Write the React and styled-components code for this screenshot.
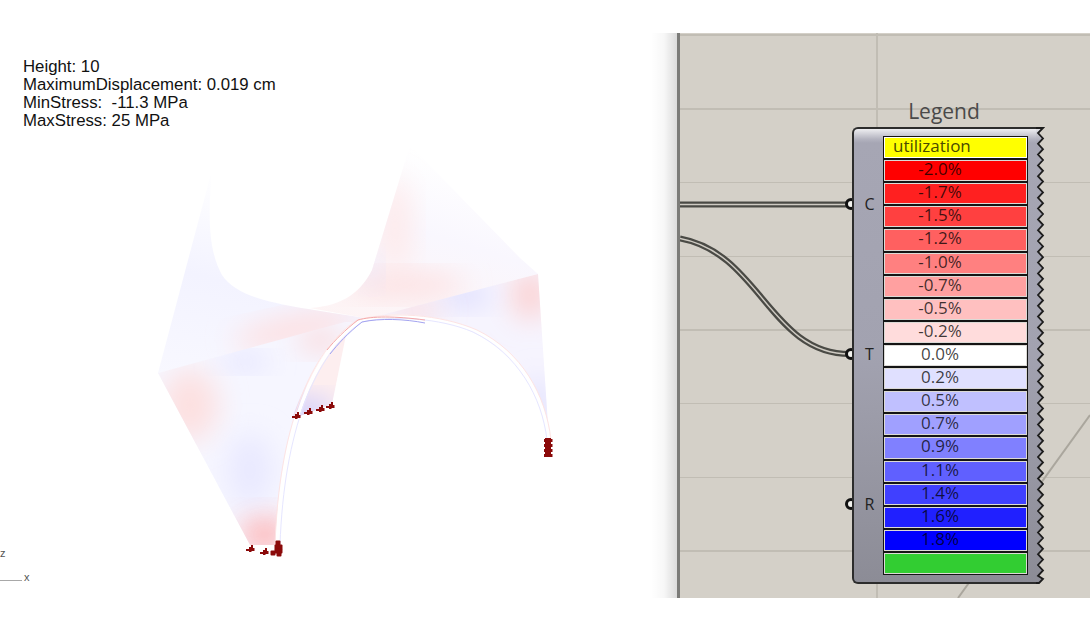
import React from 'react';
import styled, { createGlobalStyle } from 'styled-components';

const GlobalStyle = createGlobalStyle`
  html, body {
    margin: 0;
    padding: 0;
    background: #ffffff;
    overflow: hidden;
  }
`;

const Page = styled.div`
  display: flex;
  width: 1090px;
  height: 631px;
  background: #ffffff;
`;

const Viewport = styled.div`
  position: relative;
  flex: 0 0 677px;
  height: 100%;
  padding: 58px 0 0 23px;
  box-sizing: border-box;
`;

const Stats = styled.div`
  position: relative;
  z-index: 1;
  font-family: 'Liberation Sans', Arial, sans-serif;
  font-size: 16.8px;
  line-height: 18px;
  color: #111111;
  white-space: pre;
`;

const MeshDrawing = styled.svg`
  position: absolute;
  left: 0;
  top: 0;
`;

const AxisLabel = styled.span`
  position: absolute;
  left: ${(p) => p.$x}px;
  top: ${(p) => p.$y}px;
  font-family: 'Liberation Sans', Arial, sans-serif;
  font-size: 11px;
  line-height: 12px;
  color: #555555;
`;

const AxisLine = styled.div`
  position: absolute;
  left: 0;
  top: 580px;
  width: 22px;
  height: 1px;
  background: #a8a8a8;
`;

const Canvas = styled.div`
  position: relative;
  flex: 0 0 413px;
  height: 565px;
  margin-top: 33px;
  box-sizing: border-box;
  border-left: 3px solid #7b7b78;
  background-color: #d4d0c8;
  background-image:
    linear-gradient(#c1bdb4, #c1bdb4),
    repeating-linear-gradient(
      to bottom,
      transparent 0,
      transparent 1.5px,
      #c1bdb4 1.5px,
      #c1bdb4 3px,
      transparent 3px,
      transparent 73.7px
    );
  background-size: 2px 100%, 100% 100%;
  background-position: 196px 0, 0 0;
  background-repeat: no-repeat;

  &::before {
    content: '';
    position: absolute;
    left: -29px;
    top: 0;
    bottom: 0;
    width: 26px;
    background: linear-gradient(to right, rgba(0, 0, 0, 0), rgba(0, 0, 0, 0.03) 50%, rgba(0, 0, 0, 0.14));
  }
`;

const WireDrawing = styled.svg`
  position: absolute;
  left: 0;
  top: 0;
`;

const Node = styled.div`
  position: absolute;
  z-index: 0;
  left: 172px;
  top: 63px;
  display: flex;
  flex-direction: column;
  width: 194px;
`;

const NodeTitle = styled.div`
  width: 184px;
  height: 31px;
  font-family: 'Open Sans', sans-serif;
  font-size: 21px;
  line-height: 30px;
  text-align: center;
  color: #4a4a4a;
`;

const NodeBody = styled.div`
  display: flex;
  height: 457px;
`;

const Shell = styled.div`
  display: flex;
  flex: 0 0 184px;
  box-sizing: border-box;
  border: 2px solid #2c2c2c;
  border-right: 0;
  border-radius: 6px 0 0 6px;
  background: linear-gradient(
    to bottom,
    #eeeef1 0,
    #b4b4c0 10px,
    #a6a6b4 14px,
    #a2a2b0 50%,
    #8c8c96 100%
  );
`;

const Inputs = styled.div`
  display: grid;
  grid-template-rows: repeat(3, 1fr);
  flex: 0 0 29px;
  padding-bottom: 3px;
`;

const Input = styled.div`
  position: relative;
  display: flex;
  align-items: center;
  justify-content: center;
  padding-left: 2px;
  font-family: 'Open Sans', sans-serif;
  font-size: 16px;
  color: #222222;
`;

const Port = styled.span`
  position: absolute;
  z-index: -1;
  left: -9px;
  top: 50%;
  width: 6px;
  height: 6px;
  margin-top: -6px;
  border: 3px solid #111111;
  border-radius: 50%;
  background: #f4f4f0;
`;

const Swatches = styled.div`
  display: flex;
  flex: 1;
  flex-direction: column;
  gap: 2px;
  margin: 7px 8px 7px 0;
  border: 1.5px solid #141414;
  background: #141414;
`;

const Swatch = styled.div`
  flex: 1;
  box-sizing: border-box;
  padding-right: 31px;
  border: 1.5px solid #dcdad6;
  background: ${(p) => p.$color};
  font-family: 'Open Sans', sans-serif;
  font-size: 17px;
  line-height: 15px;
  text-align: center;
  color: rgba(0, 0, 0, 0.75);
`;

const HeaderSwatch = styled(Swatch)`
  padding: 0 0 0 8px;
  border-color: #ffffff;
  line-height: 15px;
  text-align: left;
  color: #4a4a00;
`;

const Zigzag = styled.svg`
  flex: 0 0 9px;
  display: block;
`;

const rows = [
  ['-2.0%', '#ff0000'],
  ['-1.7%', '#ff2020'],
  ['-1.5%', '#ff4040'],
  ['-1.2%', '#ff6060'],
  ['-1.0%', '#ff8080'],
  ['-0.7%', '#ffa0a0'],
  ['-0.5%', '#ffc0c0'],
  ['-0.2%', '#ffdcdc'],
  ['0.0%', '#ffffff'],
  ['0.2%', '#e0e0ff'],
  ['0.5%', '#c0c0ff'],
  ['0.7%', '#a0a0ff'],
  ['0.9%', '#8080ff'],
  ['1.1%', '#6060ff'],
  ['1.4%', '#4040ff'],
  ['1.6%', '#2020ff'],
  ['1.8%', '#0000ff'],
  ['', '#32cd32'],
];

const zigzagEdge = () => {
  const pts = ['0,1', '7,1'];
  for (let y = 6, i = 0; y < 452; y += 5.4, i++) {
    pts.push(`${i % 2 === 0 ? 2 : 7},${y}`);
  }
  pts.push('7,452', '3,456', '0,456');
  return pts.join(' ');
};

// little jagged cross that marks a support point on the mesh
const crossPath = ([x, y]) => `M${x - 4} ${y}h3v-2h2v-2h2v3h1.5v3h-3v1h-2.5v-1h-3z`;

const supportMarks = [
  [250, 549], [264, 552], [296, 416], [308, 412], [320, 409], [330, 406],
];

const footBlocks = [
  [278, 543], [277, 547], [280, 547], [277, 551], [280, 551], [273, 553], [279, 554],
];

function Mesh() {
  return (
    <MeshDrawing width="677" height="631" viewBox="0 0 677 631">
      <defs>
        <filter id="soft" x="-60%" y="-60%" width="220%" height="220%">
          <feGaussianBlur stdDeviation="14" />
        </filter>
        <linearGradient id="fadeLeft" x1="0" y1="1" x2="0.25" y2="0">
          <stop offset="0" stopColor="#f8f8ff" />
          <stop offset="0.5" stopColor="#f3f3ff" />
          <stop offset="1" stopColor="#ffffff" />
        </linearGradient>
        <linearGradient id="fadeRight" x1="0" y1="1" x2="0.4" y2="0">
          <stop offset="0" stopColor="#fef4f4" />
          <stop offset="0.6" stopColor="#f9f7fe" />
          <stop offset="1" stopColor="#ffffff" />
        </linearGradient>
        <clipPath id="upperLeft">
          <path d="M158 373 L212 170 C208 215 208 250 222 275 C240 302 290 306 365 318 L370 319 Z" />
        </clipPath>
        <clipPath id="upperRight">
          <path d="M410 145 L520 258 L538 274 L370 319 L310 308 C345 306 362 290 372 270 Z" />
        </clipPath>
        <clipPath id="lowerRight">
          <path d="M538 274 L549 440 C545 385 500 325 420 319 L368 318 L355 322 Z" />
        </clipPath>
        <clipPath id="lowerLeft">
          <path d="M158 373 L345 322 L355 322 C310 350 280 430 275 545 L250 545 Z" />
        </clipPath>
        <clipPath id="flap">
          <path d="M347 330 L332 404 L292 419 C300 395 320 350 347 330 Z" />
        </clipPath>
      </defs>

      <path d="M158 373 L212 170 C208 215 208 250 222 275 C240 302 290 306 365 318 L370 319 Z" fill="url(#fadeLeft)" />
      <g clipPath="url(#upperLeft)">
        <ellipse cx="295" cy="330" rx="62" ry="12" fill="#ffdcdc" filter="url(#soft)" transform="rotate(-12 295 330)" />
      </g>

      <path d="M410 145 L520 258 L538 274 L370 319 L310 308 C345 306 362 290 372 270 Z" fill="url(#fadeRight)" />
      <g clipPath="url(#upperRight)">
        <ellipse cx="395" cy="225" rx="14" ry="48" fill="#fee8e8" filter="url(#soft)" />
        <ellipse cx="405" cy="285" rx="60" ry="10" fill="#fddcdc" filter="url(#soft)" />
        <ellipse cx="372" cy="270" rx="6" ry="12" fill="#dcdcff" filter="url(#soft)" />
      </g>

      <path d="M538 274 L549 440 C545 385 500 325 420 319 L368 318 L355 322 Z" fill="#f6f4fe" />
      <g clipPath="url(#lowerRight)">
        <ellipse cx="530" cy="295" rx="18" ry="24" fill="#fcd0d0" filter="url(#soft)" />
        <ellipse cx="465" cy="295" rx="26" ry="10" fill="#d8d8ff" filter="url(#soft)" />
        <ellipse cx="415" cy="310" rx="26" ry="6" fill="#fcc8c8" filter="url(#soft)" />
        <ellipse cx="538" cy="405" rx="10" ry="28" fill="#dcdcff" filter="url(#soft)" />
      </g>

      <path d="M158 373 L345 322 L355 322 C310 350 280 430 275 545 L250 545 Z" fill="#f6f6ff" />
      <g clipPath="url(#lowerLeft)">
        <ellipse cx="190" cy="405" rx="28" ry="36" fill="#fde0e0" filter="url(#soft)" />
        <ellipse cx="245" cy="362" rx="24" ry="6" fill="#d8d8ff" filter="url(#soft)" />
        <ellipse cx="320" cy="340" rx="22" ry="10" fill="#fcd4d4" filter="url(#soft)" />
        <ellipse cx="250" cy="470" rx="22" ry="36" fill="#e8e8ff" filter="url(#soft)" />
        <path d="M240 522 L285 517 L285 550 L245 550 Z" fill="#ffa8a8" filter="url(#soft)" opacity="0.85" />
      </g>

      <path d="M347 330 L332 404 L292 419 C300 395 320 350 347 330 Z" fill="#fdeeef" />
      <g clipPath="url(#flap)">
        <ellipse cx="305" cy="412" rx="30" ry="12" fill="#c8c8ff" filter="url(#soft)" />
      </g>

      <path d="M278 545 C282 430 312 352 360 321 C392 312 440 316 475 331 C520 352 544 395 549 440" fill="none" stroke="#ffffff" strokeWidth="3.5" />
      <path d="M275 545 C279 430 309 352 357 320 C390 311 440 314 477 330 C522 352 546 395 551 440" fill="none" stroke="#fde4e4" strokeWidth="1" />
      <path d="M280 545 C284 432 314 354 362 322 C392 315 440 318 473 332 C518 354 542 397 547 440" fill="none" stroke="#e6e6ff" strokeWidth="1" />
      <path d="M327 350 C335 340 345 330 358 320 C372 316 395 316 425 320" fill="none" stroke="#f4a8a8" strokeWidth="1" />
      <path d="M330 354 C338 344 348 333 362 322 C380 318 405 319 425 323" fill="none" stroke="#a4a4f0" strokeWidth="1" />

      <g fill="#8b0a0a">
        {supportMarks.map((m) => (
          <path key={m.join()} d={crossPath(m)} />
        ))}
        {footBlocks.map((m) => (
          <rect key={m.join()} x={m[0] - 2.5} y={m[1] - 2.5} width="5" height="5" rx="1" />
        ))}
        <rect x="545" y="438" width="6" height="19" />
        {[439, 444, 449, 454].map((y) => (
          <rect key={y} x="544" y={y} width="8.5" height="3" />
        ))}
      </g>
    </MeshDrawing>
  );
}

function Wires() {
  return (
    <WireDrawing width="410" height="565" viewBox="0 0 410 565">
      <path d="M410 382 L278 565" fill="none" stroke="#aaa69d" strokeWidth="2" />
      <g fill="none">
        <path d="M0 171.5 L170 171.5" stroke="#4a4a45" strokeWidth="6" />
        <path d="M0 171.5 L170 171.5" stroke="#cfcbc3" strokeWidth="1.5" />
        <path d="M0 205.5 C80 220 90 321 170 321" stroke="#4a4a45" strokeWidth="6" />
        <path d="M0 205.5 C80 220 90 321 170 321" stroke="#cfcbc3" strokeWidth="1.5" />
      </g>
    </WireDrawing>
  );
}

export default function App() {
  return (
    <Page>
      <GlobalStyle />
      <Viewport>
        <Mesh />
        <Stats>
          {'Height: 10\nMaximumDisplacement: 0.019 cm\nMinStress:  -11.3 MPa\nMaxStress: 25 MPa'}
        </Stats>
        <AxisLabel $x={0} $y={547}>z</AxisLabel>
        <AxisLabel $x={24} $y={571}>x</AxisLabel>
        <AxisLine />
      </Viewport>
      <Canvas>
        <Wires />
        <Node>
          <NodeTitle>Legend</NodeTitle>
          <NodeBody>
            <Shell>
              <Inputs>
                <Input><Port />C</Input>
                <Input><Port />T</Input>
                <Input><Port />R</Input>
              </Inputs>
              <Swatches>
                <HeaderSwatch $color="#ffff00">utilization</HeaderSwatch>
                {rows.map(([label, color]) => (
                  <Swatch key={color} $color={color}>{label}</Swatch>
                ))}
              </Swatches>
            </Shell>
            <Zigzag width="9" height="457" viewBox="0 0 9 457">
              <defs>
                <linearGradient id="edgeFill" x1="0" y1="0" x2="0" y2="1">
                  <stop offset="0" stopColor="#e8e8ec" />
                  <stop offset="0.03" stopColor="#a6a6b4" />
                  <stop offset="0.5" stopColor="#a2a2b0" />
                  <stop offset="1" stopColor="#8c8c96" />
                </linearGradient>
              </defs>
              <polygon points={zigzagEdge()} fill="url(#edgeFill)" stroke="none" />
              <polyline points={zigzagEdge()} fill="none" stroke="#1c1c1c" strokeWidth="1.8" />
            </Zigzag>
          </NodeBody>
        </Node>
      </Canvas>
    </Page>
  );
}
